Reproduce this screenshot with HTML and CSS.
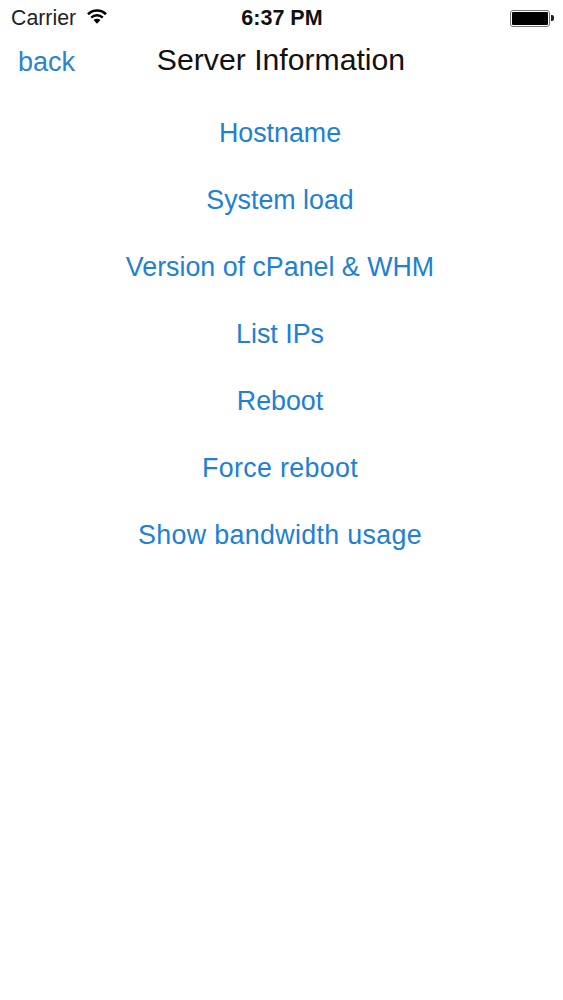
FILE: index.html
```html
<!DOCTYPE html>
<html lang="en">
<head>
<meta charset="utf-8">
<title>Server Information</title>
<link rel="stylesheet" href="styles.css">
</head>
<body>
<div class="status">
  <div class="status-left">
    <span>Carrier</span>
    <svg class="wifi" width="22" height="17" viewBox="0 0 24 17"><path d="M12 16.5 8.2 12.4a5.4 5.4 0 0 1 7.6 0ZM6.6 10.6 4.8 8.7a10.2 10.2 0 0 1 14.4 0l-1.8 1.9a7.7 7.7 0 0 0-10.8 0ZM3.2 7 1.2 5a15.2 15.2 0 0 1 21.6 0l-2 2a12.4 12.4 0 0 0-17.6 0Z" fill="#000"/></svg>
  </div>
  <div class="status-time">6:37 PM</div>
  <div class="battery-wrap">
    <div class="battery"><div class="battery-fill"></div></div>
    <div class="battery-nub"></div>
  </div>
</div>
<header class="nav">
  <a class="back">back</a>
  <h1 class="title">Server Information</h1>
</header>
<main class="menu">
  <a>Hostname</a>
  <a>System load</a>
  <a>Version of cPanel &amp; WHM</a>
  <a>List IPs</a>
  <a>Reboot</a>
  <a class="loose">Force reboot</a>
  <a class="loose">Show bandwidth usage</a>
</main>
</body>
</html>
```
FILE: styles.css
```css
* { box-sizing: border-box; }
html, body { margin: 0; height: 100%; background: #fff; }
body { font-family: "Liberation Sans", Arial, sans-serif; color: #000; overflow: hidden; }
.status { position: relative; display: flex; justify-content: space-between; align-items: center; height: 36px; padding: 0 9px 0 11px; font-size: 21.3px; color: #222; }
.status-left { display: flex; align-items: center; gap: 10px; }
.wifi { margin-top: -3px; }
.status-time { position: absolute; left: 0; right: 0; padding-left: 1px; text-align: center; font-weight: 700; font-size: 21.5px; color: #111; }
.battery-wrap { display: flex; align-items: center; gap: 1px; }
.battery { width: 40px; height: 17px; border: 1px solid #777; border-radius: 3px; padding: 1px; }
.battery-fill { height: 100%; background: #000; border-radius: 1px; }
.battery-nub { width: 3px; height: 6px; background: #222; border-radius: 0 2px 2px 0; }
.nav { position: relative; height: 50px; display: flex; justify-content: center; align-items: center; }
.back { position: absolute; left: 18px; top: 11px; font-size: 27px; color: #2a84d2; }
.title { margin: 0; font-weight: 400; font-size: 30.2px; line-height: 50px; margin-top: -3px; padding-right: 1px; color: #111; }
.menu { display: flex; flex-direction: column; align-items: center; gap: 37px; padding-top: 32px; padding-right: 3px; }
.menu a { font-size: 26.8px; line-height: 30px; color: #2080d4; }
.menu a.loose { letter-spacing: 0.35px; }
```
